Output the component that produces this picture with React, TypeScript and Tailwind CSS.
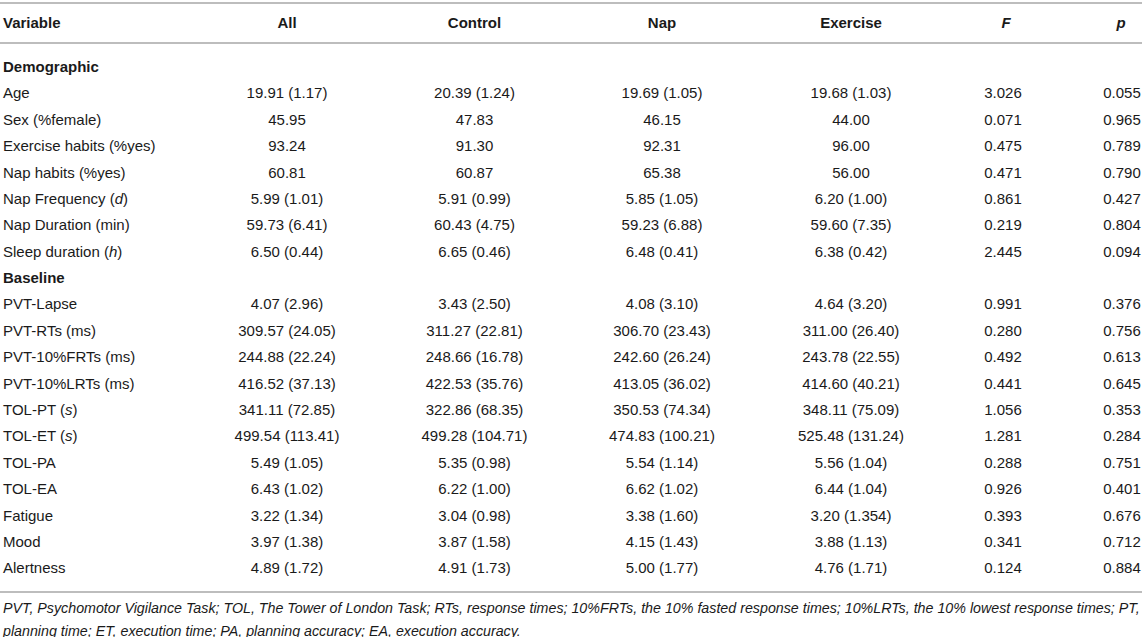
import React from "react";

type Row = { label: React.ReactNode; v?: string[]; section?: boolean };

const rows: Row[] = [
  { label: "Demographic", section: true },
  { label: "Age", v: ["19.91 (1.17)", "20.39 (1.24)", "19.69 (1.05)", "19.68 (1.03)", "3.026", "0.055"] },
  { label: "Sex (%female)", v: ["45.95", "47.83", "46.15", "44.00", "0.071", "0.965"] },
  { label: "Exercise habits (%yes)", v: ["93.24", "91.30", "92.31", "96.00", "0.475", "0.789"] },
  { label: "Nap habits (%yes)", v: ["60.81", "60.87", "65.38", "56.00", "0.471", "0.790"] },
  { label: <>Nap Frequency (<i>d</i>)</>, v: ["5.99 (1.01)", "5.91 (0.99)", "5.85 (1.05)", "6.20 (1.00)", "0.861", "0.427"] },
  { label: "Nap Duration (min)", v: ["59.73 (6.41)", "60.43 (4.75)", "59.23 (6.88)", "59.60 (7.35)", "0.219", "0.804"] },
  { label: <>Sleep duration (<i>h</i>)</>, v: ["6.50 (0.44)", "6.65 (0.46)", "6.48 (0.41)", "6.38 (0.42)", "2.445", "0.094"] },
  { label: "Baseline", section: true },
  { label: "PVT-Lapse", v: ["4.07 (2.96)", "3.43 (2.50)", "4.08 (3.10)", "4.64 (3.20)", "0.991", "0.376"] },
  { label: "PVT-RTs (ms)", v: ["309.57 (24.05)", "311.27 (22.81)", "306.70 (23.43)", "311.00 (26.40)", "0.280", "0.756"] },
  { label: "PVT-10%FRTs (ms)", v: ["244.88 (22.24)", "248.66 (16.78)", "242.60 (26.24)", "243.78 (22.55)", "0.492", "0.613"] },
  { label: "PVT-10%LRTs (ms)", v: ["416.52 (37.13)", "422.53 (35.76)", "413.05 (36.02)", "414.60 (40.21)", "0.441", "0.645"] },
  { label: <>TOL-PT (<i>s</i>)</>, v: ["341.11 (72.85)", "322.86 (68.35)", "350.53 (74.34)", "348.11 (75.09)", "1.056", "0.353"] },
  { label: <>TOL-ET (<i>s</i>)</>, v: ["499.54 (113.41)", "499.28 (104.71)", "474.83 (100.21)", "525.48 (131.24)", "1.281", "0.284"] },
  { label: "TOL-PA", v: ["5.49 (1.05)", "5.35 (0.98)", "5.54 (1.14)", "5.56 (1.04)", "0.288", "0.751"] },
  { label: "TOL-EA", v: ["6.43 (1.02)", "6.22 (1.00)", "6.62 (1.02)", "6.44 (1.04)", "0.926", "0.401"] },
  { label: "Fatigue", v: ["3.22 (1.34)", "3.04 (0.98)", "3.38 (1.60)", "3.20 (1.354)", "0.393", "0.676"] },
  { label: "Mood", v: ["3.97 (1.38)", "3.87 (1.58)", "4.15 (1.43)", "3.88 (1.13)", "0.341", "0.712"] },
  { label: "Alertness", v: ["4.89 (1.72)", "4.91 (1.73)", "5.00 (1.77)", "4.76 (1.71)", "0.124", "0.884"] },
];

const grid = "grid grid-cols-[193px_188px_187px_188px_190px_114px_1fr] items-center";

export default function App() {
  return (
    <div
      className="w-[1144px] h-[637px] bg-white text-[#1a1a1a] text-[15px] overflow-hidden"
      style={{ fontFamily: '"Liberation Sans", Arial, Helvetica, sans-serif' }}
    >
      <div className="h-[2px] bg-[#bdbdbd] mt-[2px] w-[1142px]" />
      <div className={`${grid} h-[38px] font-bold w-[1142px]`}>
        <div className="pl-[3px]">Variable</div>
        <div className="text-center">All</div>
        <div className="text-center">Control</div>
        <div className="text-center">Nap</div>
        <div className="text-center">Exercise</div>
        <div className="text-center pl-[6px]"><i>F</i></div>
        <div className="text-center pl-[40px]"><i>p</i></div>
      </div>
      <div className="h-[2px] bg-[#bdbdbd] w-[1142px]" />
      <div className="pt-[10px] pb-[2px]">
        {rows.map((r, i) => (
          <div key={i} className={`${grid} h-[26.4px]`}>
            <div className={`pl-[3px] whitespace-nowrap ${r.section ? "font-bold" : ""}`}>{r.label}</div>
            {r.v &&
              r.v.map((x, j) => (
                <div key={j} className={`text-center whitespace-nowrap ${j === 5 ? "pl-[40px]" : ""}`}>
                  {x}
                </div>
              ))}
          </div>
        ))}
      </div>
      <div className="h-[2px] bg-[#bdbdbd] mt-[7px] w-[1142px]" />
      <div className="italic text-[14.25px] leading-[23px] pt-[4px] pl-[3px] whitespace-nowrap">
        PVT, Psychomotor Vigilance Task; TOL, The Tower of London Task; RTs, response times; 10%FRTs, the 10% fasted response times; 10%LRTs, the 10% lowest response times; PT,
        <br />
        planning time; ET, execution time; PA, planning accuracy; EA, execution accuracy.
      </div>
    </div>
  );
}
